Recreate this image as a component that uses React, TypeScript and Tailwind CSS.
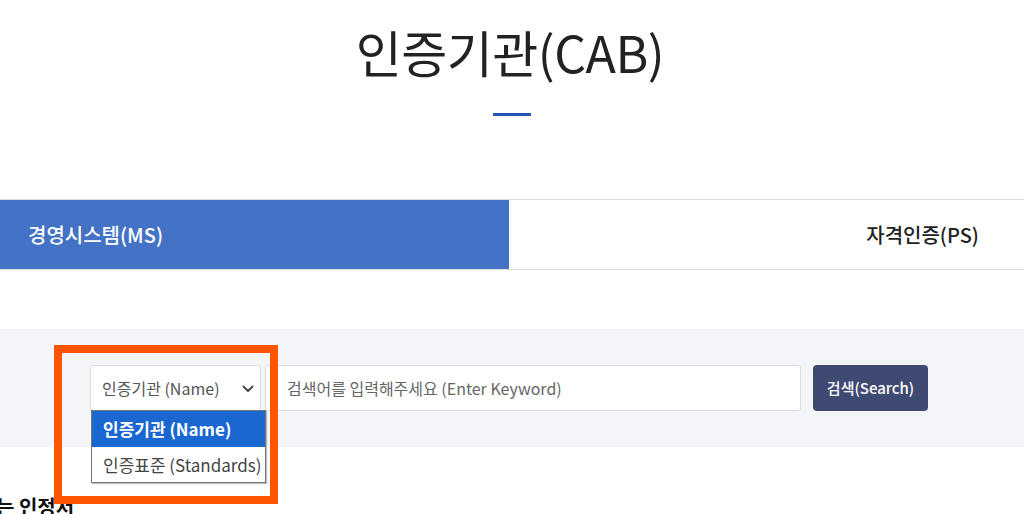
import React from "react";

const font = { fontFamily: '"Noto Sans CJK KR", "Noto Sans", sans-serif' };

export default function App() {
  return (
    <div className="w-[1024px] h-[514px] overflow-hidden bg-white relative" style={font}>
      {/* Title */}
      <div className="flex flex-col items-center pt-[21px]">
        <h1 className="text-[50px] leading-[61px] font-normal text-[#222222] tracking-[-0.5px] pr-[4px]">인증기관(CAB)</h1>
        <div className="mt-[31px] w-[38px] h-[3px] bg-[#2357b5] mr-[1px]" />
      </div>

      {/* Tabs */}
      <div className="mt-[83px] flex border-t border-b border-[#dddddd] h-[71px]">
        <div className="w-[509px] bg-[#4472c4] flex items-center pl-[28px] text-white text-[20px] font-medium">
          경영시스템(MS)
        </div>
        <div className="flex-1 flex items-center justify-end pr-[45px] text-[#222222] text-[20px] font-medium">
          자격인증(PS)
        </div>
      </div>

      {/* Search band */}
      <div className="mt-[59px] bg-[#f4f5f8] h-[118px] flex pl-[90px] pt-[36px]">
        <div className="relative flex w-[838px] h-[46px]">
          {/* select */}
          <div className="relative w-[171px] h-[46px]">
            <div className="w-full h-full bg-white border border-[#dddddd] rounded-[3px] flex items-center pl-[11px] pr-[6px] justify-between">
              <span className="text-[16px] text-[#555555]">인증기관 (Name)</span>
              <svg width="12" height="8" viewBox="0 0 12 8" className="mt-[1px]">
                <path d="M1.5 1.5 L6 6 L10.5 1.5" fill="none" stroke="#444" strokeWidth="1.8" strokeLinecap="round" strokeLinejoin="round" />
              </svg>
            </div>
            {/* dropdown */}
            <div className="absolute left-[1px] top-[45px] w-[175px] bg-white border border-[#767676] z-10 shadow-[1px_1px_1px_rgba(0,0,0,0.25)]">
              <div className="h-[36px] bg-[#1a67d2] flex items-center pl-[11px] text-white text-[17px] font-bold">
                인증기관 (Name)
              </div>
              <div className="h-[35px] flex items-center pl-[11px] text-[#444444] text-[17px] whitespace-nowrap">
                인증표준 (Standards)
              </div>
            </div>
          </div>
          {/* input */}
          <div className="ml-[4px] w-[536px] h-[46px] bg-white border border-[#dddddd] rounded-[3px] flex items-center pl-[21px]">
            <span className="text-[16px] text-[#666666]">검색어를 입력해주세요 (Enter Keyword)</span>
          </div>
          {/* button */}
          <div className="ml-[12px] w-[115px] h-[46px] bg-[#3f4a72] rounded-[4px] flex items-center justify-center text-white text-[15px] font-medium">
            검색(Search)
          </div>
          {/* annotation box */}
          <div className="absolute left-[-36px] top-[-20px] w-[224px] h-[159px] border-[8px] border-[#ff5500] z-20 pointer-events-none" />
        </div>
      </div>

      {/* next heading (cut) */}
      <div className="mt-[48px] ml-[-4px] text-[20px] font-bold text-[#111111] leading-[24px]">는 인정서</div>
    </div>
  );
}
